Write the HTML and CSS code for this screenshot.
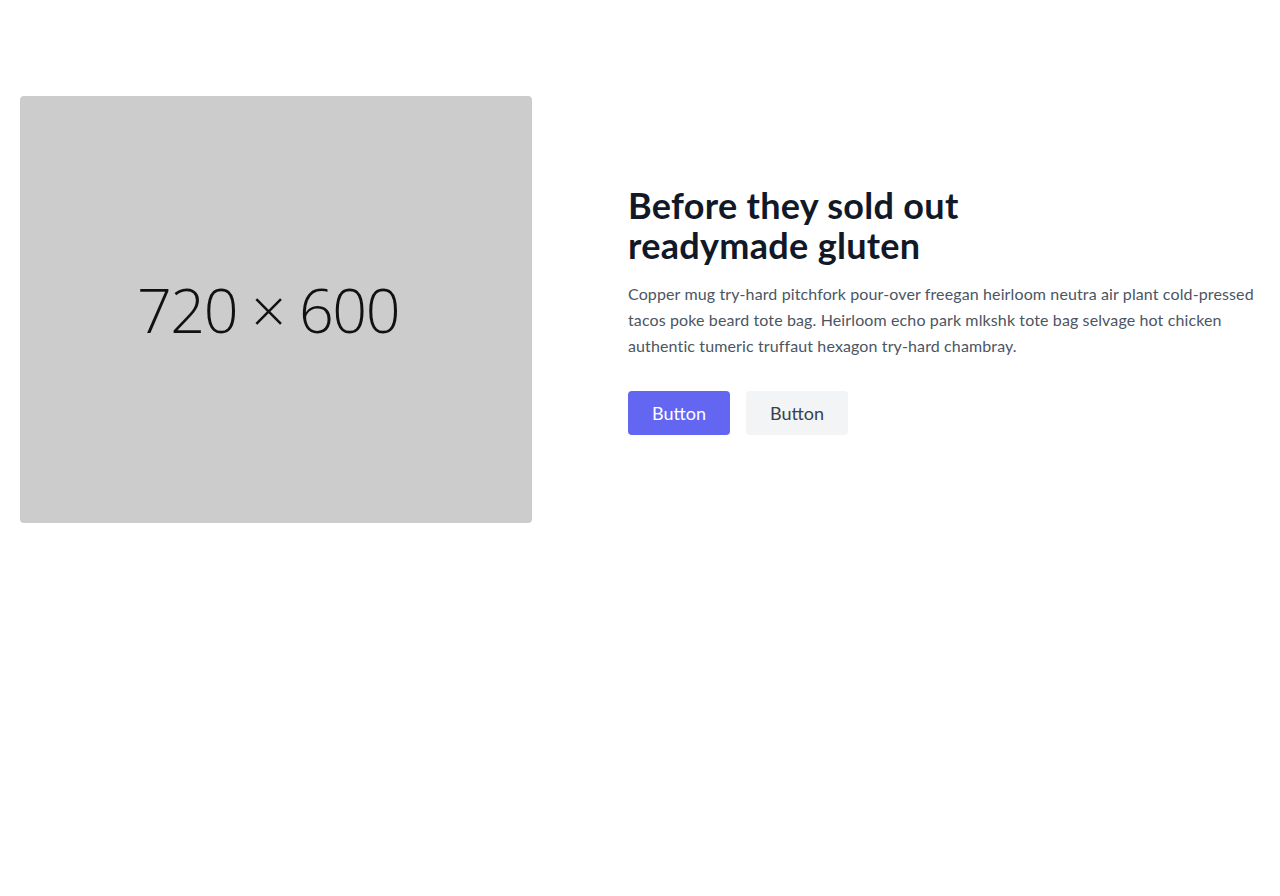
FILE: index.html
```html
<!DOCTYPE html>
<html lang="en">
<head>
<meta charset="utf-8">
<title>Content</title>
<link rel="stylesheet" href="styles.css">
</head>
<body>
<section class="section">
  <div class="container">
    <div class="media">
      <div class="placeholder"><span>720 × 600</span></div>
    </div>
    <div class="content">
      <h1 class="title">Before they sold out<br>readymade gluten</h1>
      <p class="lead">Copper mug try-hard pitchfork pour-over freegan heirloom neutra air plant cold-pressed tacos poke beard tote bag. Heirloom echo park mlkshk tote bag selvage hot chicken authentic tumeric truffaut hexagon try-hard chambray.</p>
      <div class="actions">
        <button class="btn btn-primary">Button</button>
        <button class="btn btn-secondary">Button</button>
      </div>
    </div>
  </div>
</section>
</body>
</html>
```
FILE: styles.css
```css
* { box-sizing: border-box; }
body {
  margin: 0;
  background: #fff;
  font-family: Lato, "Open Sans", sans-serif;
  color: #4b5563;
}
.container {
  max-width: 1280px;
  margin: 0 auto;
  padding: 96px 20px;
  display: flex;
  align-items: center;
}
.media {
  width: 512px;
  flex-shrink: 0;
}
.placeholder {
  height: 427px;
  background: #cccccc;
  border-radius: 4px;
  display: flex;
  align-items: center;
  justify-content: center;
  padding-right: 16px;
}
.placeholder span {
  font-family: "Open Sans", sans-serif;
  font-weight: 300;
  font-size: 61px;
  letter-spacing: -1.5px;
  color: #111;
  line-height: 1;
}
.content {
  flex-grow: 1;
  padding-left: 96px;
  display: flex;
  flex-direction: column;
  align-items: flex-start;
}
.title {
  margin: 0 0 16px;
  font-size: 36px;
  line-height: 40px;
  font-weight: 700;
  letter-spacing: 0.3px;
  color: #111827;
}
.lead {
  margin: 0 0 32px;
  font-size: 16px;
  line-height: 26px;
  letter-spacing: 0.12px;
  color: #4b5563;
}
.actions {
  display: flex;
  gap: 16px;
}
.btn {
  border: 0;
  border-radius: 4px;
  padding: 8px 24px;
  font-family: inherit;
  font-size: 18px;
  line-height: 28px;
  cursor: pointer;
}
.btn-primary {
  background: #6366f1;
  color: #fff;
}
.btn-secondary {
  background: #f3f4f6;
  color: #374151;
}
```
